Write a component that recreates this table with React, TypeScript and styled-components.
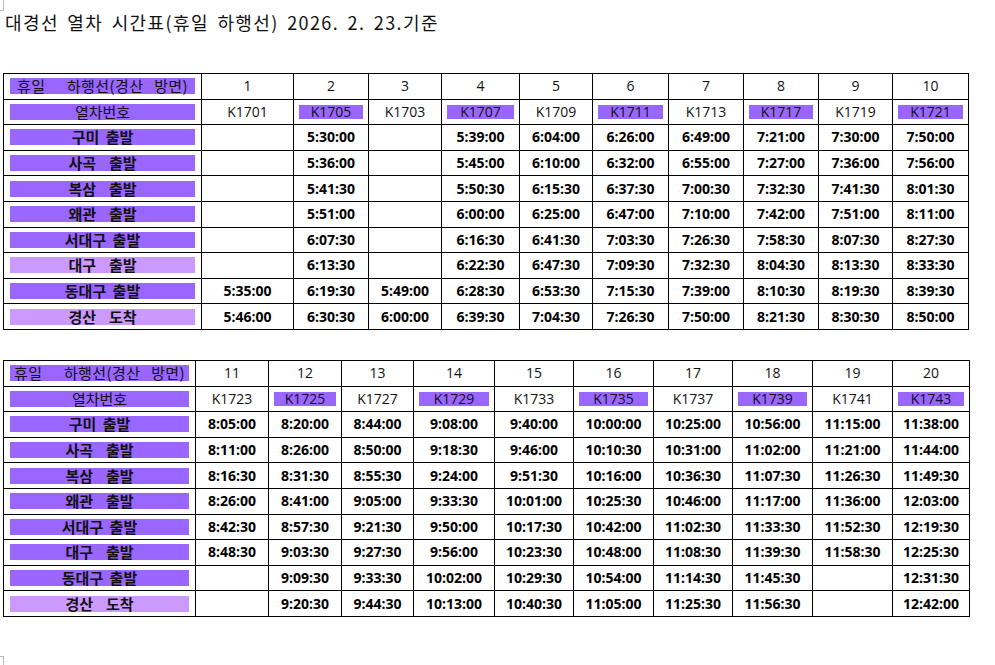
import { FC } from "react";
import styled, { createGlobalStyle, css } from "styled-components";

const GlobalStyle = createGlobalStyle`
  html, body {
    margin: 0;
    padding: 0;
    background: #ffffff;
  }
  body {
    font-family: "Open Sans", "Noto Sans CJK KR", sans-serif;
    color: #000;
  }
`;

const DARK = "#9966ff";
const LIGHT = "#cc99ff";

type Stop = {
  label: string;
  light?: boolean;
  times: string[];
};

type Sheet = {
  widths: number[];
  nos: string[];
  trains: string[];
  stops: Stop[];
};

const first: Sheet = {
  widths: [198, 92, 75, 73, 78, 73, 76, 75, 75, 74, 76],
  nos: ["1", "2", "3", "4", "5", "6", "7", "8", "9", "10"],
  trains: ["K1701", "K1705", "K1703", "K1707", "K1709", "K1711", "K1713", "K1717", "K1719", "K1721"],
  stops: [
    { label: "구미 출발", times: ["", "5:30:00", "", "5:39:00", "6:04:00", "6:26:00", "6:49:00", "7:21:00", "7:30:00", "7:50:00"] },
    { label: "사곡  출발", times: ["", "5:36:00", "", "5:45:00", "6:10:00", "6:32:00", "6:55:00", "7:27:00", "7:36:00", "7:56:00"] },
    { label: "복삼  출발", times: ["", "5:41:30", "", "5:50:30", "6:15:30", "6:37:30", "7:00:30", "7:32:30", "7:41:30", "8:01:30"] },
    { label: "왜관  출발", times: ["", "5:51:00", "", "6:00:00", "6:25:00", "6:47:00", "7:10:00", "7:42:00", "7:51:00", "8:11:00"] },
    { label: "서대구 출발", times: ["", "6:07:30", "", "6:16:30", "6:41:30", "7:03:30", "7:26:30", "7:58:30", "8:07:30", "8:27:30"] },
    { label: "대구  출발", light: true, times: ["", "6:13:30", "", "6:22:30", "6:47:30", "7:09:30", "7:32:30", "8:04:30", "8:13:30", "8:33:30"] },
    { label: "동대구 출발", times: ["5:35:00", "6:19:30", "5:49:00", "6:28:30", "6:53:30", "7:15:30", "7:39:00", "8:10:30", "8:19:30", "8:39:30"] },
    { label: "경산  도착", light: true, times: ["5:46:00", "6:30:30", "6:00:00", "6:39:30", "7:04:30", "7:26:30", "7:50:00", "8:21:30", "8:30:30", "8:50:00"] },
  ],
};

const second: Sheet = {
  widths: [192, 73, 73, 72, 81, 79, 80, 79, 80, 80, 77],
  nos: ["11", "12", "13", "14", "15", "16", "17", "18", "19", "20"],
  trains: ["K1723", "K1725", "K1727", "K1729", "K1733", "K1735", "K1737", "K1739", "K1741", "K1743"],
  stops: [
    { label: "구미 출발", times: ["8:05:00", "8:20:00", "8:44:00", "9:08:00", "9:40:00", "10:00:00", "10:25:00", "10:56:00", "11:15:00", "11:38:00"] },
    { label: "사곡  출발", times: ["8:11:00", "8:26:00", "8:50:00", "9:18:30", "9:46:00", "10:10:30", "10:31:00", "11:02:00", "11:21:00", "11:44:00"] },
    { label: "복삼  출발", times: ["8:16:30", "8:31:30", "8:55:30", "9:24:00", "9:51:30", "10:16:00", "10:36:30", "11:07:30", "11:26:30", "11:49:30"] },
    { label: "왜관  출발", times: ["8:26:00", "8:41:00", "9:05:00", "9:33:30", "10:01:00", "10:25:30", "10:46:00", "11:17:00", "11:36:00", "12:03:00"] },
    { label: "서대구 출발", times: ["8:42:30", "8:57:30", "9:21:30", "9:50:00", "10:17:30", "10:42:00", "11:02:30", "11:33:30", "11:52:30", "12:19:30"] },
    { label: "대구  출발", times: ["8:48:30", "9:03:30", "9:27:30", "9:56:00", "10:23:30", "10:48:00", "11:08:30", "11:39:30", "11:58:30", "12:25:30"] },
    { label: "동대구 출발", times: ["", "9:09:30", "9:33:30", "10:02:00", "10:29:30", "10:54:00", "11:14:30", "11:45:30", "", "12:31:30"] },
    { label: "경산  도착", light: true, times: ["", "9:20:30", "9:44:30", "10:13:00", "10:40:30", "11:05:00", "11:25:30", "11:56:30", "", "12:42:00"] },
  ],
};

const Timetable: FC<{ sheet: Sheet }> = ({ sheet }) => {
  const total = sheet.widths.reduce((a, b) => a + b, 0);
  return (
    <Table style={{ width: total }}>
      <colgroup>
        {sheet.widths.map((w, i) => (
          <col key={i} style={{ width: w }} />
        ))}
      </colgroup>
      <tbody>
        <tr>
          <Cell>
            <Label $wide>휴일  하행선(경산 방면)</Label>
          </Cell>
          {sheet.nos.map((n) => (
            <Cell key={n}>{n}</Cell>
          ))}
        </tr>
        <tr>
          <Cell>
            <Label>열차번호</Label>
          </Cell>
          {sheet.trains.map((t, i) => (
            <Cell key={t}>{i % 2 === 1 ? <TrainMark>{t}</TrainMark> : t}</Cell>
          ))}
        </tr>
        {sheet.stops.map((s) => (
          <tr key={s.label}>
            <Cell>
              <Label $light={s.light} $bold>
                {s.label}
              </Label>
            </Cell>
            {s.times.map((t, i) => (
              <Cell key={i} $time>
                {t}
              </Cell>
            ))}
          </tr>
        ))}
      </tbody>
    </Table>
  );
};

const App: FC = () => (
  <>
    <GlobalStyle />
    <Page>
      <CornerMark $at="top" />
      <Title>대경선 열차 시간표(휴일 하행선) 2026. 2. 23.기준</Title>
      <Timetable sheet={first} />
      <Timetable sheet={second} />
      <CornerMark $at="bottom" />
    </Page>
  </>
);
export default App;

const Page = styled.div`
  position: relative;
  width: 995px;
  height: 665px;
  padding: 0 0 0 3px;
  box-sizing: border-box;
  display: flex;
  flex-direction: column;
  align-items: flex-start;
  gap: 30px;
`;

const Title = styled.h1`
  margin: 9px 0 8px 2px;
  font-family: "Noto Sans CJK KR", sans-serif;
  font-weight: 400;
  font-size: 18px;
  line-height: 26px;
  letter-spacing: 1.4px;
  word-spacing: 3px;
  white-space: pre;
  color: #111;
`;

const Table = styled.table`
  border-collapse: collapse;
  table-layout: fixed;
  border: 1px solid #000;

  tr {
    height: 25.6px;
  }
`;

const Cell = styled.td<{ $time?: boolean }>`
  border: 1px solid #000;
  padding: 0;
  text-align: center;
  vertical-align: middle;
  font-family: "Open Sans", sans-serif;
  font-size: 14px;
  line-height: 16px;
  color: #111;
  ${(p) =>
    p.$time &&
    css`
      font-weight: 700;
      color: #000;
    `}
`;

const Label = styled.div<{ $light?: boolean; $bold?: boolean; $wide?: boolean }>`
  margin: 0 6px 0 6px;
  height: 16px;
  background: ${(p) => (p.$light ? LIGHT : DARK)};
  font-family: "Noto Sans CJK KR", sans-serif;
  font-size: 15px;
  line-height: 16px;
  white-space: pre;
  word-spacing: ${(p) => (p.$wide ? "7px" : "3px")};
  letter-spacing: ${(p) => (p.$wide ? "0.4px" : "0")};
  color: #111;
  font-weight: ${(p) => (p.$bold ? 700 : 400)};
`;

const TrainMark = styled.div`
  margin: 0 5px;
  height: 14px;
  line-height: 14px;
  background: ${DARK};
`;

const CornerMark = styled.span<{ $at: "top" | "bottom" }>`
  position: absolute;
  left: 0;
  width: 3px;
  height: 10px;
  border-right: 1px solid #bbb;
  ${(p) =>
    p.$at === "top"
      ? css`
          top: 0;
          border-bottom: 1px solid #bbb;
        `
      : css`
          top: 656px;
          border-top: 1px solid #bbb;
        `}
`;
